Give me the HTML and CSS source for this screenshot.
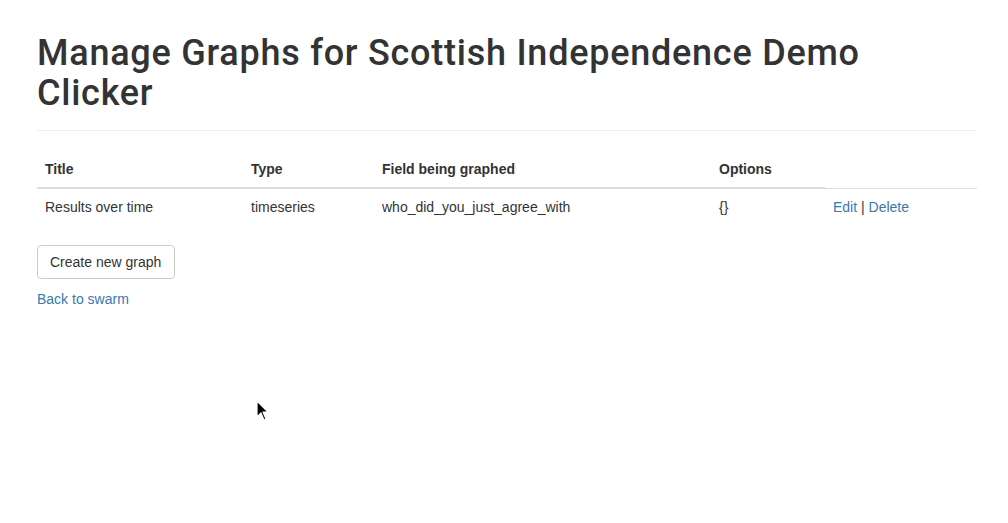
FILE: index.html
```html
<!DOCTYPE html>
<html>
<head>
<meta charset="utf-8">
<link rel="stylesheet" href="styles.css">
</head>
<body>
<div class="container">
  <div class="page-header">
    <h1>Manage Graphs for Scottish Independence Demo Clicker</h1>
  </div>
  <table class="table">
    <thead>
      <tr>
        <th class="c-title">Title</th>
        <th class="c-type">Type</th>
        <th class="c-field">Field being graphed</th>
        <th class="c-opts">Options</th>
      </tr>
    </thead>
    <tbody>
      <tr>
        <td>Results over time</td>
        <td>timeseries</td>
        <td>who_did_you_just_agree_with</td>
        <td>{}</td>
        <td><a href="#">Edit</a> | <a href="#">Delete</a></td>
      </tr>
    </tbody>
  </table>
  <p class="actions"><button class="btn" type="button">Create new graph</button></p>
  <p class="back"><a href="#">Back to swarm</a></p>
</div>
<svg class="cursor" width="14" height="22" viewBox="0 0 14 22" xmlns="http://www.w3.org/2000/svg">
  <path d="M1 1 L1 17 L5 13 L8 20 L10 19 L7 12 L12 12 Z" fill="#000" stroke="#fff" stroke-width="1.2" stroke-linejoin="round"/>
</svg>
</body>
</html>
```
FILE: styles.css
```css
html, body {
  margin: 0;
  padding: 0;
  background: #fff;
}
body {
  font-family: "Liberation Sans", Arial, Helvetica, sans-serif;
  font-size: 14px;
  line-height: 20px;
  color: #333;
  position: relative;
  min-height: 523px;
}
.container {
  width: 940px;
  padding-left: 37px;
}
.page-header {
  margin: 0 0 20px;
  padding: 34px 0 9px;
  border-bottom: 1px solid #eee;
}
.page-header h1 {
  margin: 0 0 8px;
  max-width: 900px;
  font-family: Roboto, "Liberation Sans", Arial, sans-serif;
  font-size: 36px;
  font-weight: 500;
  letter-spacing: 0.75px;
  line-height: 39.6px;
  color: #333;
}
.table {
  width: 100%;
  border-collapse: collapse;
  border-spacing: 0;
  margin-bottom: 20px;
}
.table th, .table td {
  padding: 8px;
  text-align: left;
  vertical-align: top;
  line-height: 20px;
}
.table th {
  font-weight: bold;
  border-bottom: 2px solid #ddd;
  vertical-align: bottom;
}
.table td {
  border-top: 1px solid #ddd;
}
.c-title { width: 190px; }
.c-type { width: 115px; }
.c-field { width: 321px; }
.c-opts { width: 98px; }
a {
  color: #337ab7;
  text-decoration: none;
}
.actions {
  margin: 0 0 10px;
}
.btn {
  font-family: inherit;
  font-size: 14px;
  line-height: 20px;
  color: #333;
  background: #fff;
  border: 1px solid #ccc;
  border-radius: 4px;
  padding: 6px 13px 6px 12px;
  margin: 0;
  cursor: pointer;
}
.back {
  margin: 0;
}
.cursor {
  position: absolute;
  left: 256px;
  top: 400px;
}
```
